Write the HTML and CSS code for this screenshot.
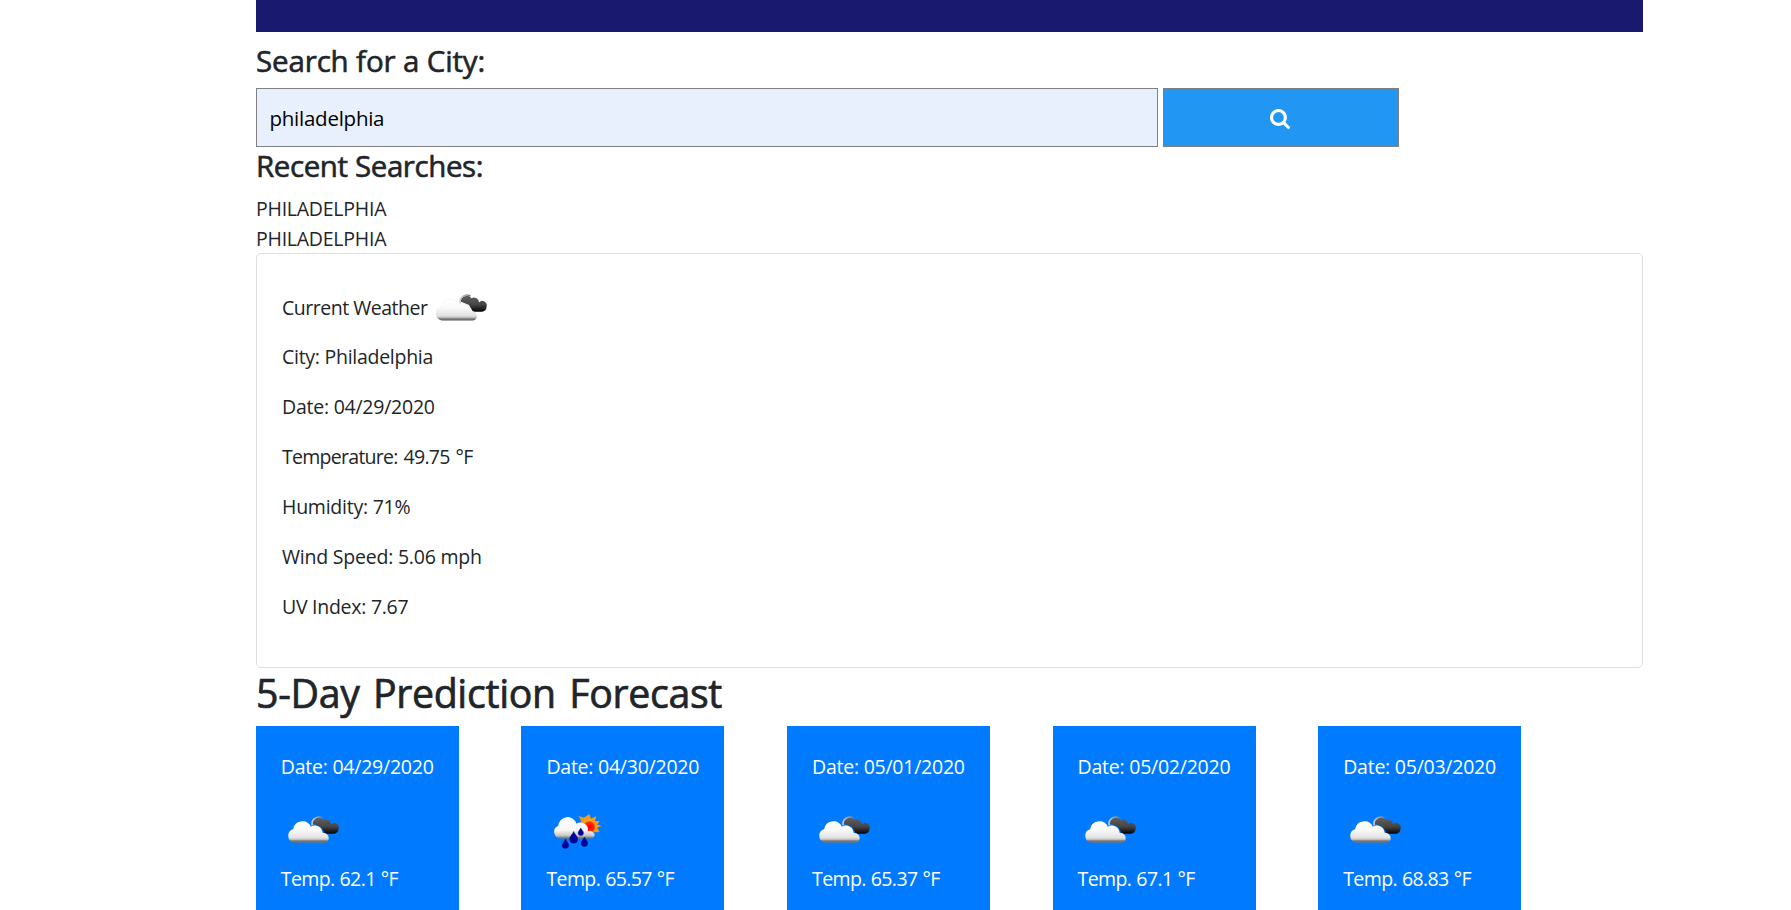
FILE: index.html
```html
<!DOCTYPE html>
<html lang="en">
<head>
<meta charset="utf-8">
<title>Weather Dashboard</title>
<link rel="stylesheet" href="styles.css">
</head>
<body>
<svg class="defs" width="0" height="0" aria-hidden="true">
  <defs>
    <linearGradient id="white" gradientUnits="userSpaceOnUse" x1="0" y1="18" x2="0" y2="42">
      <stop offset="0" stop-color="#fff"/><stop offset=".45" stop-color="#fafafa"/><stop offset=".78" stop-color="#e2e2e2"/><stop offset=".86" stop-color="#bbb"/><stop offset=".91" stop-color="#777"/><stop offset="1" stop-color="#666"/>
    </linearGradient>
    <linearGradient id="whiteRain" gradientUnits="userSpaceOnUse" x1="0" y1="17" x2="0" y2="37.5">
      <stop offset="0" stop-color="#fff"/><stop offset=".6" stop-color="#f6f6f6"/><stop offset=".85" stop-color="#c8c8c8"/><stop offset="1" stop-color="#666"/>
    </linearGradient>
    <linearGradient id="dark" gradientUnits="userSpaceOnUse" x1="0" y1="15" x2="0" y2="33">
      <stop offset="0" stop-color="#666"/><stop offset=".6" stop-color="#444"/><stop offset="1" stop-color="#000"/>
    </linearGradient>
    <linearGradient id="rim" x1="0" y1="0" x2="1" y2="0">
      <stop offset="0" stop-color="#ccc"/><stop offset="1" stop-color="#777"/>
    </linearGradient>
    <radialGradient id="sun" cx=".5" cy=".6" r=".5">
      <stop offset="0" stop-color="#f00"/><stop offset=".7" stop-color="#ff2a00"/><stop offset="1" stop-color="#ffa31a"/>
    </radialGradient>
    <filter id="halo" x="-20%" y="-20%" width="140%" height="140%">
      <feDropShadow dx="0" dy="0" stdDeviation=".5" flood-color="#999" flood-opacity=".5"/>
    </filter>
    <symbol id="clouds" viewBox="0 0 62 62">
      <path fill="url(#dark)" d="M31.500 22.500a6.200 6.200 0 0 1 11-3.300a5 5 0 0 1 7.500 4.200a4.500 4.500 0 0 1 7.500 4.600a4.700 4.700 0 0 1-4.500 4.700H44L40 26z"/>
      <path fill="none" stroke="url(#rim)" stroke-width="1.600" d="M31.200 24.500a6.800 6.800 0 0 1 10.300-7.300"/>
      <path filter="url(#halo)" fill="url(#white)" d="M13 41.600A6.500 6.800 0 0 1 12.100 28.300a9.300 9.300 0 0 1 17.700-2.500a7.500 7.500 0 0 1 11.600 5.100q.4 1 .2 1.200a5.200 5.200 0 0 1 6.100 5.100a4.700 4.700 0 0 1-4.400 4.400z"/>
    </symbol>
    <symbol id="rain-sun" viewBox="0 0 62 62">
      <path fill="#f39a1d" d="M43.300 13l1.700 4.800 5.500-2.800-1.600 5 4.600.3-2.300 3.400 4.500 1.300-4.500 1.700 2.300 4.300-5 .3-12.500-7.500-1-4.300-2.500-4.500 5.500 1.800z"/>
      <circle cx="43.300" cy="24.800" r="6.700" fill="url(#sun)"/>
      <path filter="url(#halo)" fill="url(#whiteRain)" d="M14.500 37.500a6.600 6.600 0 0 1-2.200-12.700a9.300 9.300 0 0 1 18.200-2a7.300 7.300 0 0 1 11.300 7.400a5.300 5.300 0 0 1 6.900 3.500a4.300 4.300 0 0 1-4.200 3.800z"/>
      <g fill="#0000a0" stroke="#001070" stroke-width=".5">
        <path d="M27.700 30.500c1.300 3.200 4 4.900 4 7.700a4 4 0 0 1-8 0c0-2.800 2.700-4.500 4-7.700z"/>
        <path d="M19.400 38c1 2.500 3.300 4.200 3.300 6.200a3.300 3.300 0 0 1-6.600 0c0-2 2.300-3.700 3.300-6.200z"/>
        <path d="M38.400 36c1 2.500 3.300 4.200 3.300 6.200a3.300 3.300 0 0 1-6.600 0c0-2 2.300-3.700 3.300-6.200z"/>
        <path d="M34.800 27c.8 2 2.600 3.200 2.600 4.900a2.600 2.600 0 0 1-5.200 0c0-1.700 1.800-2.900 2.600-4.900z"/>
      </g>
    </symbol>
  </defs>
</svg>
<main class="container">
  <header class="banner"></header>
  <h3 class="heading">Search for a City:</h3>
  <form class="search">
    <input class="search-input" type="text" value="philadelphia">
    <button class="search-button" type="button" aria-label="Search">
      <svg class="search-icon" viewBox="0 0 1664 1664"><path d="M1152 704q0-185-131.500-316.500T704 256 387.500 387.500 256 704t131.500 316.500T704 1152t316.500-131.500T1152 704zm512 832q0 52-38 90t-90 38q-54 0-90-38l-343-342q-179 124-399 124-143 0-273.500-55.500t-225-150-150-225T0 704t55.500-273.500 150-225 225-150T704 0t273.500 55.500 225 150 150 225T1408 704q0 220-124 399l343 343q37 37 37 90z"/></svg>
    </button>
  </form>
  <h3 class="heading heading-recent">Recent Searches:</h3>
  <div class="recent">
    <div>PHILADELPHIA</div>
    <div>PHILADELPHIA</div>
  </div>
  <section class="current">
    <p class="current-title"><span>Current Weather</span><svg class="weather-icon"><use href="#clouds"/></svg></p>
    <p class="line">City: Philadelphia</p>
    <p class="line line-date">Date: 04/29/2020</p>
    <p class="line line-temp">Temperature: 49.75 °F</p>
    <p class="line line-humidity">Humidity: 71%</p>
    <p class="line line-wind">Wind Speed: 5.06 mph</p>
    <p class="line">UV Index: 7.67</p>
  </section>
  <h2 class="forecast-heading">5-Day Prediction Forecast</h2>
  <section class="forecast">
    <article class="day"><p class="line-date">Date: 04/29/2020</p><svg class="weather-icon"><use href="#clouds"/></svg><p class="day-temp">Temp. 62.1 °F</p></article>
    <article class="day"><p class="line-date">Date: 04/30/2020</p><svg class="weather-icon"><use href="#rain-sun"/></svg><p class="day-temp">Temp. 65.57 °F</p></article>
    <article class="day"><p class="line-date">Date: 05/01/2020</p><svg class="weather-icon"><use href="#clouds"/></svg><p class="day-temp">Temp. 65.37 °F</p></article>
    <article class="day"><p class="line-date">Date: 05/02/2020</p><svg class="weather-icon"><use href="#clouds"/></svg><p class="day-temp">Temp. 67.1 °F</p></article>
    <article class="day"><p class="line-date">Date: 05/03/2020</p><svg class="weather-icon"><use href="#clouds"/></svg><p class="day-temp">Temp. 68.83 °F</p></article>
  </section>
</main>
</body>
</html>
```
FILE: styles.css
```css
* { box-sizing: border-box; }
html, body { height: 100%; }
body {
  margin: 0;
  overflow: hidden;
  background: #fff;
  color: #212529;
  font: 400 19.5px/30px "Open Sans", sans-serif;
}
p, h2, h3 { margin: 0; }
.defs { position: absolute; }
.container { width: 1387px; margin-left: 256px; }
.banner { height: 32px; background: #191970; }
.heading {
  height: 56px;
  padding-top: 11px;
  font-size: 29.5px;
  line-height: 36px;
  font-weight: 500;
  letter-spacing: -.14px;
  -webkit-text-stroke: .6px #212529;
}
.heading-recent { height: 46px; padding-top: 1px; letter-spacing: -.4px; }
.search { display: flex; gap: 5px; height: 59px; }
.search-input {
  width: 902px;
  padding: 0 12px 0 12.5px;
  border: 1px solid #808080;
  border-radius: 0;
  outline: 0;
  background: #e8f0fe;
  color: #000;
  font: 400 20.5px "Open Sans", sans-serif;
  letter-spacing: -.25px;
}
.search-button {
  display: flex;
  align-items: center;
  justify-content: center;
  width: 236px;
  padding: 3px 2px 0 0;
  border: 1px solid #808080;
  border-left: 0;
  background: #2196f3;
}
.search-icon { width: 20px; height: 20px; fill: #fff; }
.recent { height: 60px; padding-top: 1px; letter-spacing: -.24px; }
.current {
  height: 415px;
  padding: 26px 25px 0;
  border: 1px solid #dfdfdf;
  border-radius: 5px;
}
.current-title { display: flex; height: 62px; letter-spacing: -.48px; }
.current-title span { width: 146.500px; padding-top: 13px; white-space: nowrap; }
.weather-icon { display: block; flex: none; width: 62px; height: 62px; }
.current .weather-icon { margin-top: -1px; }
.line { margin-bottom: 20px; letter-spacing: -.27px; }
.line-date { letter-spacing: -.24px; }
.line-temp { letter-spacing: -.72px; word-spacing: 1.500px; }
.line-humidity { letter-spacing: -.24px; }
.line-wind { letter-spacing: -.22px; }
.forecast-heading {
  height: 58px;
  padding-top: 1px;
  font-size: 39.3px;
  line-height: 48px;
  font-weight: 500;
  letter-spacing: -.33px;
  word-spacing: 3.500px;
  -webkit-text-stroke: .7px #212529;
}
.forecast { display: flex; gap: 62.6px; margin-left: -.2px; }
.day {
  flex: none;
  width: 203px;
  height: 200px;
  padding: 26px 25px 0;
  background: #007bff;
  color: #fff;
  white-space: nowrap;
}
.day .weather-icon { margin-top: 19px; margin-bottom: 1px; }
.day-temp { letter-spacing: -.6px; word-spacing: .5px; }
```
